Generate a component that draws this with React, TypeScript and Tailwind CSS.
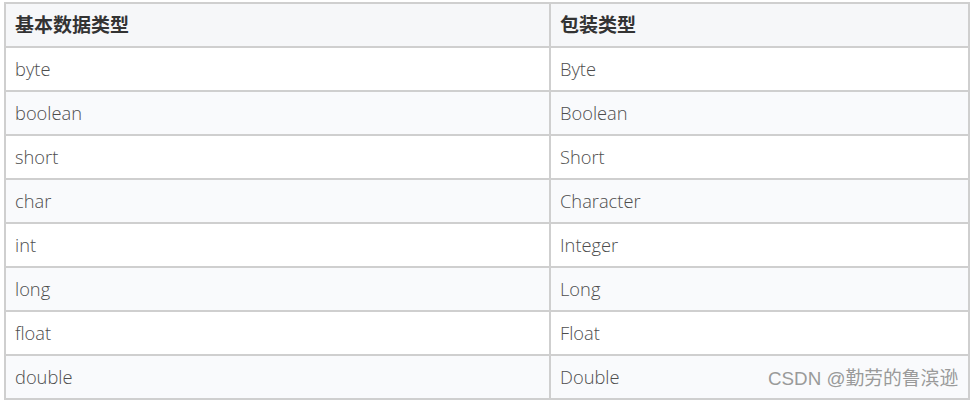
import React from "react";

const rows: [string, string][] = [
  ["byte", "Byte"],
  ["boolean", "Boolean"],
  ["short", "Short"],
  ["char", "Character"],
  ["int", "Integer"],
  ["long", "Long"],
  ["float", "Float"],
  ["double", "Double"],
];

export default function App() {
  return (
    <div
      className="w-[974px] h-[405px] bg-white pt-[2px] pl-[4px] relative"
      style={{ fontFamily: '"Open Sans", "Noto Sans CJK SC", sans-serif' }}
    >
      <div className="w-[966px] border-l-2 border-t-2 border-[#cfcfcf]">
        <div className="flex h-[44px] bg-[#f6f7f9] border-b-2 border-[#cfcfcf]">
          <div className="w-[545px] border-r-2 border-[#cfcfcf] flex items-center pl-[9px] text-[19px] font-bold text-[#333]">
            基本数据类型
          </div>
          <div className="w-[419px] border-r-2 border-[#cfcfcf] flex items-center pl-[9px] text-[19px] font-bold text-[#333]">
            包装类型
          </div>
        </div>
        {rows.map(([a, b], i) => (
          <div
            key={a}
            className={`flex h-[44px] border-b-2 border-[#cfcfcf] ${i % 2 === 1 ? "bg-[#f9fafc]" : "bg-white"}`}
          >
            <div className="w-[545px] border-r-2 border-[#cfcfcf] flex items-center pl-[9px] text-[18.3px] font-light text-[#4d4d4d]">
              {a}
            </div>
            <div className="w-[419px] border-r-2 border-[#cfcfcf] flex items-center pl-[9px] text-[18.3px] font-light text-[#4d4d4d]">
              {b}
            </div>
          </div>
        ))}
      </div>
      <div
        className="absolute left-[768px] top-[365px] text-[18.8px] text-[#9a9a9a]"
        style={{ fontFamily: '"Liberation Sans", "Noto Sans CJK SC", sans-serif' }}
      >
        CSDN @勤劳的鲁滨逊
      </div>
    </div>
  );
}
